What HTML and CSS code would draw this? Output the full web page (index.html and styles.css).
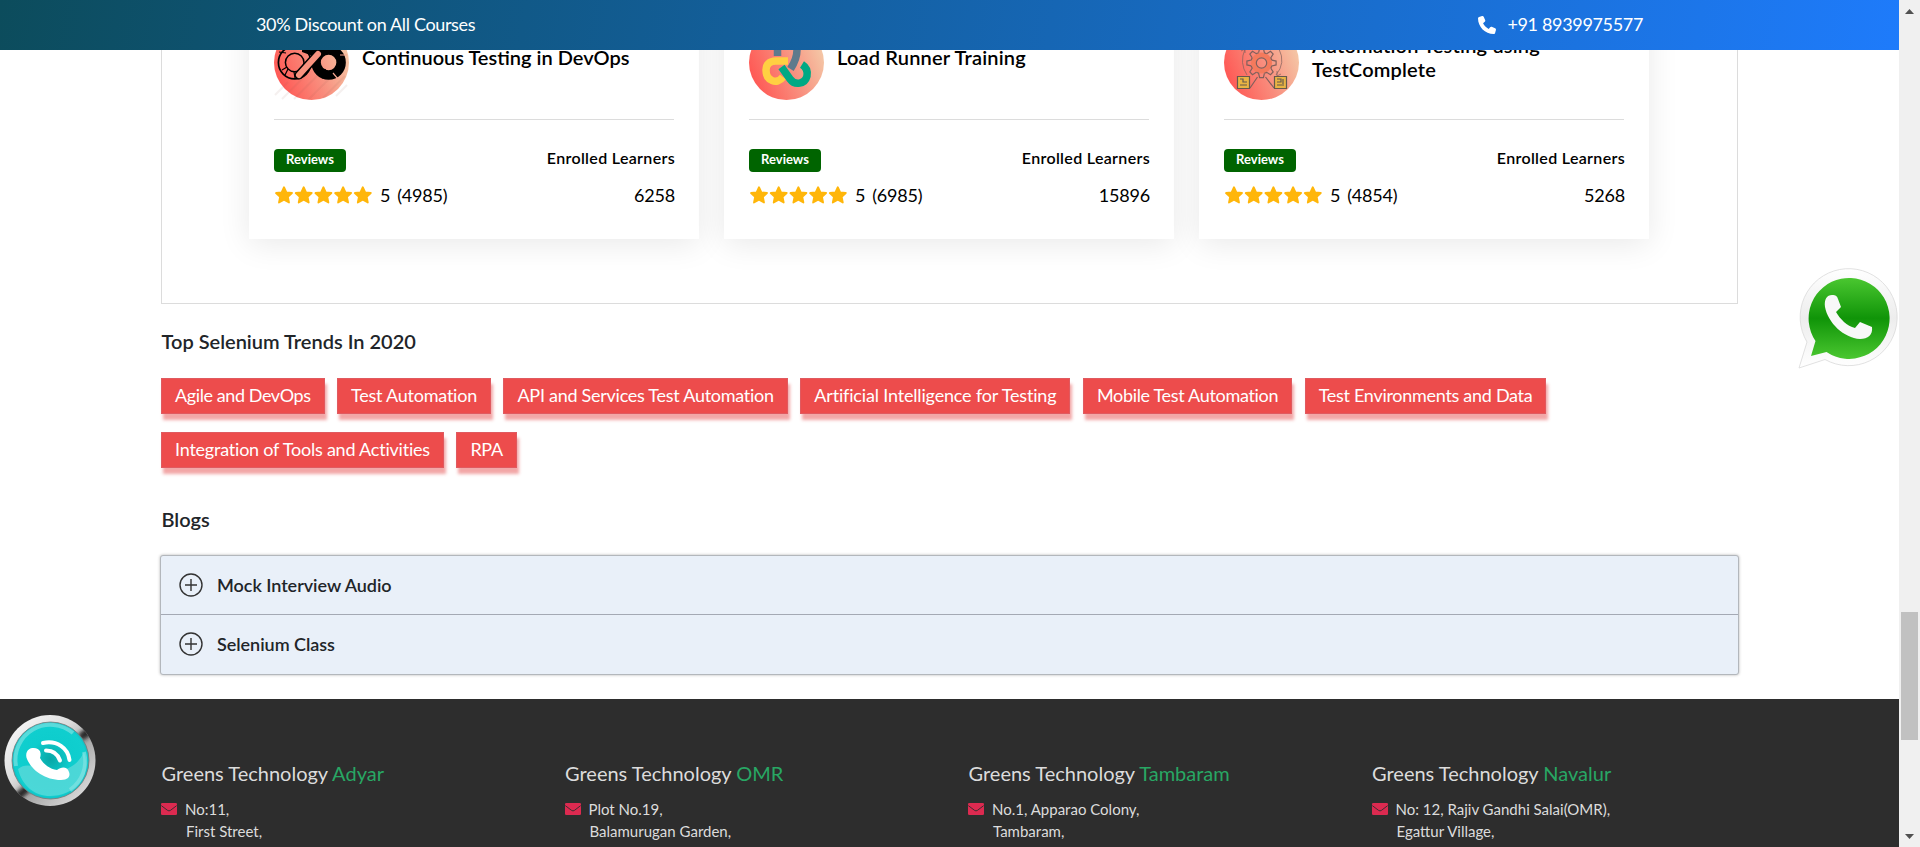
FILE: index.html
```
<!DOCTYPE html>
<html lang="en">
<head>
<meta charset="utf-8">
<title>Greens Technology</title>
<link rel="stylesheet" href="styles.css">
</head>
<body>
<svg class="defs" width="0" height="0" aria-hidden="true">
  <defs>
    <linearGradient id="peach" x1="0" y1=".7" x2="1" y2=".3"><stop offset="0" stop-color="#ff5552"/><stop offset=".5" stop-color="#f98c7c"/><stop offset="1" stop-color="#f4cba9"/></linearGradient>
    <symbol id="stars" viewBox="0 0 98 18">
      <g fill="#ffb60a" stroke="#ffb60a" stroke-width="1.8" stroke-linejoin="round">
        <path id="star" d="M9.5 1.2l2.4 5.1 5.6.7-4.1 3.9 1.1 5.6-5-2.8-5 2.8 1.1-5.6L1.5 7l5.600-.7z"/>
        <use href="#star" x="19.7"/><use href="#star" x="39.4"/><use href="#star" x="59.1"/><use href="#star" x="78.8"/>
      </g>
    </symbol>
    <symbol id="mail" viewBox="0 0 16 12"><rect width="16" height="12" rx="1.3" fill="#dc2a50"/><path d="M.3 2.6L6.6 7.4Q8 8.4 9.4 7.4L15.7 2.6" fill="none" stroke="#2d2d2d" stroke-width=".9"/></symbol>
    <symbol id="plus" viewBox="0 0 24 24"><g fill="none" stroke="#333" stroke-width="1.4"><circle cx="12" cy="12" r="11"/><path d="M12 6v12M6 12h12"/></g></symbol>
    <symbol id="phone" viewBox="0 0 512 512"><path d="M165 25c-8-19-29-29-48-23L29 26C12 31 0 46 0 64c0 247 201 448 448 448 18 0 33-12 38-29l24-88c6-19-4-40-23-48l-96-40c-16-7-35-2-46 12l-41 49c-70-33-127-90-160-160l49-41c14-11 19-30 12-46z"/></symbol>
  </defs>
</svg>

<header class="topbar">
  <span class="offer">30% Discount on All Courses</span>
  <span class="call"><svg class="call-icon"><use href="#phone"/></svg>+91 8939975577</span>
</header>

<main class="page">
  <section class="courses">
    <article class="card">
      <div class="card-head">
        <svg class="course-icon" viewBox="0 0 75 75">
          <circle cx="37.5" cy="37.5" r="37.5" fill="url(#peach)"/>
          <path d="M1 70l13-13M8 74l24-24M20 74l30-30M34 75l30-30M49 73l22-22M62 71l11-11" stroke="#8b5550" stroke-opacity=".09" stroke-width="2"/>
          <g fill="none">
            <circle cx="54.600" cy="37.500" r="12.500" stroke="#000" stroke-width="9.500"/>
            <path d="M49 18l-3 6M62 17v8M66 30h7M59 48l5 6" stroke="#f5a58f" stroke-width="1.2"/>
            <circle cx="20.700" cy="37.500" r="16.300" stroke="#000" stroke-width="1.700"/>
            <circle cx="20.700" cy="37.500" r="9.300" stroke="#000" stroke-width="1.500"/>
            <path d="M5 27l7 1M14 44l-3 6M20 47l1 6M8 45l5-3" stroke="#000" stroke-width="1.200"/>
            <path d="M28 20h12l4 5-5 6-11-4zM40 43l9 11 3-10z" fill="#000"/>
            <path d="M25 50L44 29" stroke="#000" stroke-width="9" stroke-linecap="round"/>
            <path d="M25 50L44 29" stroke="#f8927f" stroke-width="6" stroke-linecap="round"/>
          </g>
        </svg>
        <h3>Continuous Testing in DevOps</h3>
      </div>
      <div class="labels"><span class="badge">Reviews</span><span class="enrolled">Enrolled Learners</span></div>
      <div class="values"><svg class="stars"><use href="#stars"/></svg><span>5</span><span class="count">(4985)</span><span class="learners">6258</span></div>
    </article>
    <article class="card">
      <div class="card-head">
        <svg class="course-icon" viewBox="0 0 75 75">
          <circle cx="37.5" cy="37.5" r="37.5" fill="url(#peach)"/>
          <g fill="none" stroke-width="7.500">
            <path d="M28.500 31v-8q0-10 9-10 10 0 10.500 12 0 9-6.500 19" stroke="#5f7a8c"/>
            <path d="M39 36H27c-7 0-10 4-10 9 0 11 11 15 17 7" stroke="#ffd042"/>
            <path d="M32.500 42l8.500 12c5 7 15 5 17-3 1-6-1-9-5-11.500" stroke="#00a984"/>
          </g>
        </svg>
        <h3>Load Runner Training</h3>
      </div>
      <div class="labels"><span class="badge">Reviews</span><span class="enrolled">Enrolled Learners</span></div>
      <div class="values"><svg class="stars"><use href="#stars"/></svg><span>5</span><span class="count">(6985)</span><span class="learners">15896</span></div>
    </article>
    <article class="card">
      <div class="card-head">
        <svg class="course-icon" viewBox="0 0 75 75">
          <circle cx="37.5" cy="37.5" r="37.5" fill="url(#peach)"/>
          <circle cx="37.500" cy="38" r="8" fill="none" stroke="#f47a5c" stroke-width="5"/>
          <g transform="translate(37.500 38)" fill="none" stroke="#80605c" stroke-width="1.200">
            <path id="tooth" d="M-2.900-10.300L-1.900-14.600H1.900L2.900-10.300L5.200-9.300"/>
            <use href="#tooth" transform="rotate(45)"/><use href="#tooth" transform="rotate(90)"/><use href="#tooth" transform="rotate(135)"/><use href="#tooth" transform="rotate(180)"/><use href="#tooth" transform="rotate(225)"/><use href="#tooth" transform="rotate(270)"/><use href="#tooth" transform="rotate(315)"/>
            <circle r="5.200"/>
          </g>
          <g fill="none" stroke="#80605c">
            <path d="M23 50q-8-12-2-26M52 50q10-12 3-26M21 28l0-4-4 2M53 46l0 5 4-2" stroke-opacity=".7"/>
            <path d="M33.500 52L26 63M41.500 52l8.500 11" stroke-width="1.200"/>
          </g>
          <g transform="translate(0 -1)" stroke="#65594d" stroke-width="1.200" fill="#e9b443"><path d="M13.500 52.500h12v12h-12zM50.500 52.500h12v12h-12z"/><path d="M16 55h3v3h4M16 61h7M53 55h4v3h-4M59 55v5M53 61h7" fill="none"/></g>
        </svg>
        <h3>Automation Testing using TestComplete</h3>
      </div>
      <div class="labels"><span class="badge">Reviews</span><span class="enrolled">Enrolled Learners</span></div>
      <div class="values"><svg class="stars"><use href="#stars"/></svg><span>5</span><span class="count">(4854)</span><span class="learners">5268</span></div>
    </article>
  </section>

  <h2 class="section-title trends-title">Top Selenium Trends In 2020</h2>
  <div class="tags">
    <span class="tag tag-agile">Agile and DevOps</span>
    <span class="tag tag-automation">Test Automation</span>
    <span class="tag tag-api">API and Services Test Automation</span>
    <span class="tag tag-ai">Artificial Intelligence for Testing</span>
    <span class="tag">Mobile Test Automation</span>
    <span class="tag tag-data">Test Environments and Data</span>
    <span class="tag tag-tools">Integration of Tools and Activities</span>
    <span class="tag">RPA</span>
  </div>

  <h2 class="section-title blogs-title">Blogs</h2>
  <div class="accordion">
    <div class="item"><svg class="plus"><use href="#plus"/></svg>Mock Interview Audio</div>
    <div class="item"><svg class="plus"><use href="#plus"/></svg>Selenium Class</div>
  </div>
</main>

<footer class="footer">
  <div class="branch"><h4>Greens Technology <b>Adyar</b></h4><div class="address"><svg class="mail"><use href="#mail"/></svg><p>No:11,<br><span>First Street,</span></p></div></div>
  <div class="branch"><h4>Greens Technology <b>OMR</b></h4><div class="address"><svg class="mail"><use href="#mail"/></svg><p>Plot No.19,<br><span>Balamurugan Garden,</span></p></div></div>
  <div class="branch"><h4>Greens Technology <b>Tambaram</b></h4><div class="address"><svg class="mail"><use href="#mail"/></svg><p>No.1, Apparao Colony,<br><span>Tambaram,</span></p></div></div>
  <div class="branch"><h4>Greens Technology <b>Navalur</b></h4><div class="address"><svg class="mail"><use href="#mail"/></svg><p>No: 12, Rajiv Gandhi Salai(OMR),<br><span>Egattur Village,</span></p></div></div>
</footer>

<svg class="whatsapp" viewBox="0 0 100 101">
  <defs>
    <linearGradient id="wa-ring" x1="0" y1="0" x2="0" y2="1"><stop offset="0" stop-color="#fff"/><stop offset=".5" stop-color="#ededed"/><stop offset="1" stop-color="#fff"/></linearGradient>
    <linearGradient id="wa-green" x1="0" y1="0" x2="0" y2="1"><stop offset="0" stop-color="#4ac730"/><stop offset=".5" stop-color="#109408"/><stop offset="1" stop-color="#4ac730"/></linearGradient>
  </defs>
  <path d="M1 100L9 74A48.500 48.500 0 1 1 27 91.500z" fill="url(#wa-ring)" stroke="#d9d9d9" stroke-width=".8"/>
  <path d="M13 88L17.500 73A40.500 40.500 0 1 1 28.500 84z" fill="url(#wa-green)"/>
  <path d="M34 27c-5 0-8 4-7 12 3 16 19 31 35 32 8 0 13-4 12-12l-12-5-5 6c-8-2-15-9-19-16l5-5-3-8c-1-3-2-4-6-4z" fill="#f8f8f8"/>
</svg>

<svg class="call-badge" viewBox="0 0 92 93">
  <defs>
    <linearGradient id="chrome" x1="0" y1="0" x2="1" y2="1"><stop offset="0" stop-color="#fff"/><stop offset=".4" stop-color="#ddd"/><stop offset=".6" stop-color="#aaa"/><stop offset="1" stop-color="#eee"/></linearGradient>
    <radialGradient id="teal" cx=".5" cy=".48"><stop offset="0" stop-color="#08a6a6"/><stop offset=".55" stop-color="#0ecdcd"/><stop offset="1" stop-color="#10cfcf"/></radialGradient>
    <filter id="soften"><feGaussianBlur stdDeviation="2"/></filter>
    <clipPath id="badge-clip"><circle cx="46" cy="46.500" r="45.500"/></clipPath>
  </defs>
  <circle cx="46" cy="46.500" r="45.500" fill="url(#chrome)"/>
  <g clip-path="url(#badge-clip)"><path d="M76 24l12-9M12 84l13-11" stroke="#222" stroke-width="8" filter="url(#soften)"/></g>
  <circle cx="46.500" cy="46.500" r="38.500" fill="#10c6c9" stroke="#777" stroke-width=".8"/>
  <circle cx="46.500" cy="46.500" r="36.500" fill="url(#teal)"/>
  <path d="M14 55c10-9 25 2 34 2 10 0 24-2 32-19 9 26-11 44-34 44-15 0-28-10-32-27z" fill="#5adada" opacity=".8"/>
  <path d="M12 52A35 35 0 0 1 69 19M66 76A35 35 0 0 0 80 38" fill="none" stroke="#8be4e4" stroke-width="4" opacity=".6"/>
  <path d="M28 34c-5 1-7 6-5 11 5 12 19 21 34 21 6 0 10-3 8-8-2-6-8-5-12-2-7-1-13-5-17-12 2-5 0-11-8-10z" fill="#fff"/>
  <path d="M42 36.500c7 0 12 4 14 10M39 29c14-3 25 5 26.500 17" fill="none" stroke="#fff" stroke-width="4" stroke-linecap="round"/>
</svg>

<div class="scrollbar">
  <svg class="arrow" viewBox="0 0 9 5"><path d="M0 5L4.500 0 9 5z" fill="#505050"/></svg>
  <div class="thumb"></div>
  <svg class="arrow" viewBox="0 0 9 5"><path d="M0 0l4.500 5L9 0z" fill="#505050"/></svg>
</div>
</body>
</html>
```

FILE: styles.css
```
* { box-sizing: border-box; }

body {
  margin: 0;
  height: 847px;
  overflow: hidden;
  background: #fff;
  color: #212529;
  font-family: Lato, "Liberation Sans", sans-serif;
  font-size: 18px;
}

h2, h3, h4, p { margin: 0; }

.defs { position: absolute; }

.topbar {
  position: fixed;
  z-index: 5;
  top: 0;
  left: 0;
  width: 1899px;
  height: 50px;
  padding: 0 256px 2px;
  display: flex;
  align-items: center;
  justify-content: space-between;
  color: #fff;
  letter-spacing: -.34px;
  background: linear-gradient(100deg, #0c4c5c 0%, #1e7bfb 100%);
}

.call { display: flex; align-items: center; gap: 11px; }
.call-icon { width: 18px; height: 18px; margin-top: 2px; fill: #fff; }

.page {
  width: 1578px;
  margin-left: 161px;
}

.courses {
  width: 1577px;
  height: 304px;
  padding: 0 87px;
  display: flex;
  gap: 25px;
  align-items: flex-start;
  border: 1px solid #dcdcdc;
  border-top: 0;
}

.card {
  width: 450px;
  height: 239px;
  padding: 25px;
  flex: none;
  background: #fff;
  color: #000;
  box-shadow: 0 5px 30px rgba(0, 0, 0, .09);
}

.card-head {
  height: 95px;
  display: flex;
  gap: 13px;
  border-bottom: 1px solid #dcdcdc;
}

.course-icon { width: 75px; height: 75px; flex: none; }

.card-head h3 {
  height: 64px;
  display: flex;
  align-items: center;
  font-size: 20px;
  line-height: 24px;
  font-weight: 600;
}

.card + .card h3 { letter-spacing: .18px; }

.labels {
  height: 23px;
  margin-top: 29px;
  display: flex;
  justify-content: space-between;
}

.badge {
  width: 72px;
  height: 23px;
  border-radius: 4px;
  background: #006400;
  color: #fff;
  font-size: 13px;
  line-height: 20px;
  font-weight: 700;
  text-align: center;
}

.enrolled {
  margin-right: -1px;
  font-size: 16px;
  line-height: 18px;
  font-weight: 600;
  letter-spacing: .33px;
}

.values {
  margin-top: 11px;
  display: flex;
  line-height: 24px;
  letter-spacing: -.2px;
}

.stars { width: 99px; height: 18px; margin: 3px 7px 0 0; }
.count { margin-left: 7px; }
.learners { margin-left: auto; margin-right: -1px; }

.section-title {
  padding-left: .5px;
  font-size: 20px;
  line-height: 24px;
  font-weight: 600;
}

.trends-title { padding-top: 25px; }

.tags {
  margin-top: 25px;
  display: flex;
  flex-wrap: wrap;
  gap: 18px 12.5px;
}

.tag {
  height: 36px;
  padding: 0 13px;
  border: 1px solid #e05a60;
  background: #ed4c4c;
  box-shadow: 2px 6px 3px rgba(226, 60, 60, .45);
  color: #fff;
  line-height: 32px;
  letter-spacing: -.32px;
}

.tag-agile { letter-spacing: -.41px; }
.tag-automation { letter-spacing: -.24px; }
.tag-api { letter-spacing: -.27px; }
.tag-ai { letter-spacing: -.17px; }
.tag-data { letter-spacing: -.29px; }
.tag-tools { letter-spacing: -.22px; }

.blogs-title { margin-top: 39px; }

.accordion {
  margin: 24px 0 0 -1px;
  width: 1579px;
  border: 1px solid #b3b7bc;
  border-radius: 3px;
  background: #e9f0f9;
  box-shadow: 0 0 3px rgba(0, 0, 0, .3);
}

.item {
  height: 58px;
  padding-left: 18px;
  display: flex;
  align-items: center;
  gap: 14px;
  font-weight: 600;
  letter-spacing: -.04px;
}

.item + .item {
  height: 60px;
  padding-bottom: 1px;
  border-top: 1px solid #a4a9b4;
}

.plus { width: 24px; height: 24px; }

.footer {
  width: 1899px;
  height: 148px;
  margin-top: 24px;
  padding: 62px 0 0 161px;
  display: grid;
  grid-template-columns: repeat(4, 403.5px);
  align-content: start;
  background: #2d2d2d;
  color: #dcdcdc;
}

.branch h4 {
  padding-left: .5px;
  font-size: 20px;
  line-height: 24px;
  font-weight: 400;
}

.branch b { font-weight: 400; color: #28a764; }

.address {
  margin-top: 13px;
  display: flex;
  gap: 8px;
  font-size: 15px;
  line-height: 22px;
}

.address span { padding-left: 1px; }
.mail { width: 16px; height: 12px; margin-top: 5px; }

.whatsapp {
  position: fixed;
  left: 1798px;
  top: 268px;
  width: 100px;
  height: 101px;
}

.call-badge {
  position: fixed;
  left: 4px;
  top: 714px;
  width: 92px;
  height: 93px;
}

.scrollbar {
  position: fixed;
  z-index: 6;
  right: 0;
  top: 0;
  width: 21px;
  height: 847px;
  padding: 9px 2px 8px;
  display: flex;
  flex-direction: column;
  align-items: center;
  justify-content: space-between;
  background: #f0f0f0;
}

.thumb {
  width: 17px;
  height: 128px;
  margin: 598px 0 94px;
  background: #c1c1c1;
}

.arrow { width: 9px; height: 5px; }
```
